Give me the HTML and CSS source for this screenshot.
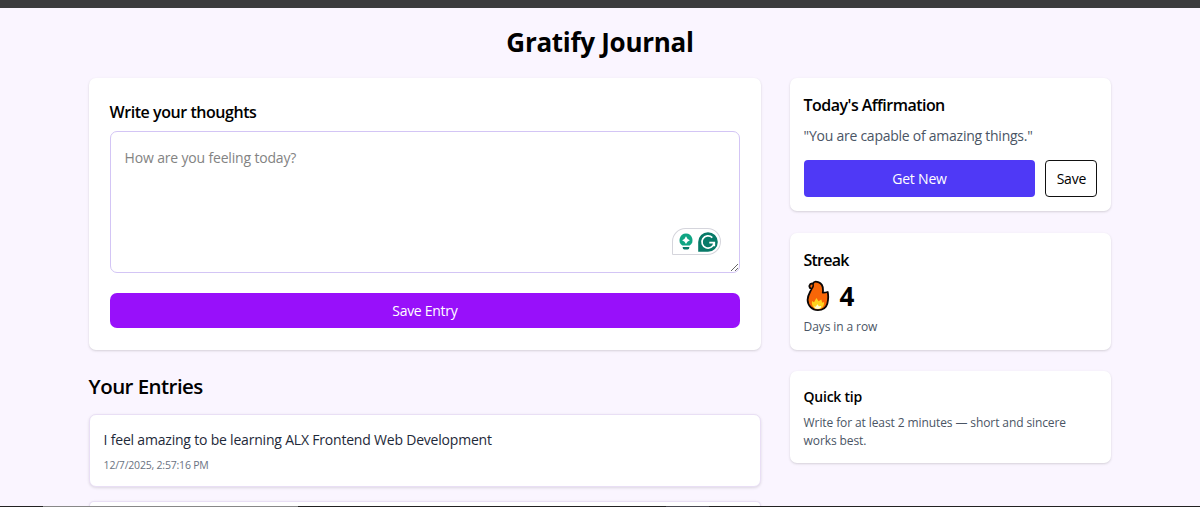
FILE: index.html
```html
<!DOCTYPE html>
<html lang="en">
<head>
    <meta charset="UTF-8">
    <meta name="viewport" content="width=device-width, initial-scale=1.0">
    <title>Gratify Journal</title>
    <link rel="stylesheet" href="styles.css">
</head>
<body>
    <div class="top-bar"></div>
    <div class="page">
        <h1 class="title">Gratify Journal</h1>
        <div class="layout">
            <main class="journal">
                <form class="card editor">
                    <label class="editor-label" for="thoughts">Write your thoughts</label>
                    <div class="editor-field">
                        <textarea class="editor-input" id="thoughts" placeholder="How are you feeling today?"></textarea>
                        <div class="assistant">
                            <svg width="16" height="18" viewBox="0 0 16 18">
                                <path d="M8 .6a6.6 6.6 0 0 0-3.7 12h7.4A6.6 6.6 0 0 0 8 .6z" fill="#10a583"/>
                                <path d="M8 3.3Q8.9 6.3 11.9 7.2Q8.9 8.1 8 11.1Q7.1 8.1 4.1 7.2Q7.1 6.3 8 3.3z" fill="#fff"/>
                                <path d="M4.7 14.1h6.6v.7a1.7 1.7 0 0 1-1.7 1.7H6.4a1.7 1.7 0 0 1-1.7-1.7z" fill="#087a68"/>
                            </svg>
                            <svg width="20" height="20" viewBox="0 0 20 20">
                                <path d="M10 .2a9.8 9.8 0 1 1 0 19.6H.2V10A9.800 9.800 0 0 1 10 .2z" fill="#087a68"/>
                                <path d="M14.300 5.600A6.100 6.100 0 1 0 16.100 10.700H11.300M13.900 10.700H16.300V14.200" fill="none" stroke="#fff" stroke-width="1.700"/>
                            </svg>
                        </div>
                    </div>
                    <button class="btn-entry" type="button">Save Entry</button>
                </form>

                <h2 class="entries-title">Your Entries</h2>
                <div class="entries">
                    <article class="entry">
                        <p class="entry-text">I feel amazing to be learning ALX Frontend Web Development</p>
                        <p class="entry-date">12/7/2025, 2:57:16 PM</p>
                    </article>
                    <article class="entry entry-cut"></article>
                </div>
            </main>

            <aside class="sidebar">
                <section class="card affirmation">
                    <h3 class="card-title">Today's Affirmation</h3>
                    <p class="quote">"You are capable of amazing things."</p>
                    <div class="actions">
                        <button class="btn-new" type="button">Get New</button>
                        <button class="btn-save" type="button">Save</button>
                    </div>
                </section>
                <section class="card streak">
                    <h3 class="card-title">Streak</h3>
                    <div class="streak-count">
                        <svg class="flame" width="26" height="32" viewBox="0 0 26 32">
                            <path d="M7.5 9C4 7.5 5.2 3 9 3.6C9.8 1.6 12 1.3 14.3 2.2C18 3.5 19.5 7.5 18.8 12.6C20 12.8 21.5 12.6 23.7 12C24.6 16.5 24.2 20.5 23.3 23.7C22 28 18 30.1 13.9 30.1C8 30.1 3.7 25.5 3.6 20C3.5 15.5 6 12.5 7.5 9z" fill="#f76608" stroke="#0b0706" stroke-width="1.8" stroke-linejoin="round"/>
                            <path d="M9 3.8C9.6 5.5 9.3 7.5 7.5 9" fill="none" stroke="#0b0706" stroke-width="1.3"/>
                            <path d="M8 21l2 1.2 2.4-4.2 2.2 3.2 2.7-1.7 1 3.2 1.8-.8c.3 4.5-2.4 7.2-6.3 7.2-4 0-6.5-3.500-5.800-8.100z" fill="#ffd21f"/>
                            <path d="M10 26.500l1.800.3 1.500-2.500 1.600 2 2.300-.3c-.2 2-1.500 3-3.300 3s-3.400-.8-3.900-2.500z" fill="#fffbd0"/>
                        </svg>
                        <span>4</span>
                    </div>
                    <p class="streak-label">Days in a row</p>
                </section>
                <section class="card tip">
                    <h4 class="tip-title">Quick tip</h4>
                    <p class="tip-text">Write for at least 2 minutes — short and sincere works best.</p>
                </section>
            </aside>
        </div>
    </div>
    <div class="bottom-bar"></div>
</body>
</html>
```

FILE: styles.css
```css
* {
    box-sizing: border-box;
    margin: 0;
    padding: 0;
}

body {
    display: flex;
    flex-direction: column;
    height: 507px;
    overflow: hidden;
    font-family: "Open Sans", "Noto Sans", sans-serif;
    font-size: 14px;
    color: #000;
    background-color: #faf5ff;
}

button,
textarea {
    font: inherit;
    letter-spacing: inherit;
}

.top-bar {
    flex: none;
    height: 8px;
    background-color: #3b3b3e;
}

.page {
    flex: 1;
    min-height: 0;
    width: 1022.8px;
    margin: 0 auto;
    padding-top: 18px;
}

.title {
    margin-bottom: 20px;
    font-size: 26px;
    font-weight: 700;
    line-height: 32px;
    letter-spacing: -0.28px;
    text-align: center;
}

.layout {
    display: grid;
    grid-template-columns: 672.5px 321.8px;
    justify-content: space-between;
    align-items: start;
}

.card {
    background-color: #fff;
    border-radius: 7px;
    box-shadow: 0 1px 3px rgba(0, 0, 0, 0.1), 0 1px 2px rgba(0, 0, 0, 0.06);
}

.editor {
    display: flex;
    flex-direction: column;
    height: 272px;
    padding: 22px 21px 21px;
}

.editor-label {
    margin-bottom: 6px;
    font-size: 16px;
    font-weight: 600;
    line-height: 25px;
    letter-spacing: -0.45px;
}

.editor-field {
    position: relative;
    height: 142px;
    margin-bottom: 20px;
}

.editor-input {
    display: block;
    width: 100%;
    height: 142px;
    padding: 14px;
    line-height: 23px;
    letter-spacing: -0.17px;
    background-color: #fff;
    border: 1px solid #d3c5f5;
    border-radius: 7px;
    outline: none;
}

.editor-input::placeholder {
    color: #838383;
}

.assistant {
    position: absolute;
    right: 19px;
    bottom: 18px;
    display: flex;
    align-items: center;
    gap: 4px;
    width: 49px;
    height: 27px;
    padding-left: 5px;
    background-color: #fff;
    border: 1px solid #d5d5dc;
    border-radius: 14px 14px 14px 1px;
}

.btn-entry {
    height: 35px;
    color: #fff;
    letter-spacing: -0.3px;
    background-color: #9810fa;
    border: none;
    border-radius: 7px;
}

.entries-title {
    margin: 22px 0 13px;
    font-size: 20.5px;
    font-weight: 600;
    line-height: 29px;
    letter-spacing: -0.55px;
}

.entries {
    display: flex;
    flex-direction: column;
    gap: 14px;
}

.entry {
    height: 73px;
    padding: 14px;
    background-color: #fff;
    border: 1px solid #e9dff5;
    border-radius: 7px;
    box-shadow: 0 1px 3px rgba(0, 0, 0, 0.12);
}

/* only the top edge fits in the window */
.entry-cut {
    height: 5px;
    padding: 0;
    border-bottom: none;
    border-radius: 7px 7px 0 0;
}

.entry-text {
    margin-bottom: 6px;
    line-height: 22px;
    letter-spacing: -0.2px;
    color: #1e2939;
}

.entry-date {
    font-size: 10.5px;
    line-height: 17px;
    letter-spacing: -0.2px;
    color: #6a7282;
}

.sidebar {
    display: flex;
    flex-direction: column;
}

.sidebar .card {
    padding: 14px;
}

.card-title {
    font-size: 16px;
    font-weight: 600;
    line-height: 26px;
    letter-spacing: -0.53px;
}

.affirmation {
    height: 133px;
    margin-bottom: 22px;
}

.quote {
    margin: 6px 0 13px;
    line-height: 23px;
    letter-spacing: -0.25px;
    color: #4a5565;
}

.actions {
    display: flex;
    gap: 10px;
}

.btn-new,
.btn-save {
    height: 37px;
    letter-spacing: -0.2px;
    border-radius: 4px;
}

.btn-new {
    flex: 1;
    color: #fff;
    background-color: #4f39f6;
    border: none;
}

.btn-save {
    width: 52px;
    background-color: #fff;
    border: 1px solid #111;
}

.streak {
    height: 117px;
    margin-bottom: 21px;
}

.streak .card-title {
    letter-spacing: -0.8px;
}

.streak-count {
    display: flex;
    align-items: center;
    gap: 10px;
    height: 32px;
    margin: 7px 0 6px;
    font-size: 26px;
    font-weight: 700;
    line-height: 32px;
}

.streak-label {
    font-size: 12px;
    line-height: 18px;
    letter-spacing: -0.1px;
    color: #4a5565;
}

.tip {
    height: 92px;
}

.tip-title {
    margin-bottom: 6px;
    font-size: 14px;
    font-weight: 600;
    line-height: 23px;
    letter-spacing: -0.25px;
}

.tip-text {
    font-size: 12px;
    line-height: 18px;
    letter-spacing: -0.1px;
    color: #4a5565;
}

.bottom-bar {
    flex: none;
    position: relative;
    height: 1px;
    background: linear-gradient(to right, #222 43px, #888 43px, #888 298px, #222 298px, #222 666px, #484850 666px, #484850 709px, #222 709px);
}
```
